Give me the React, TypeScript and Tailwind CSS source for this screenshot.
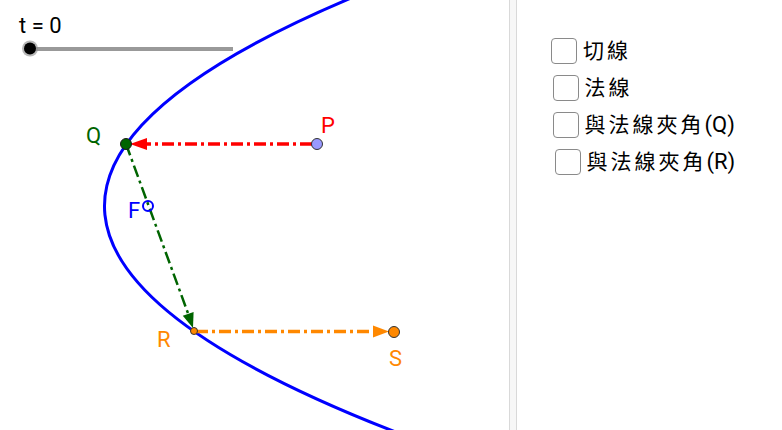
import React from "react";

const FONT = { fontFamily: "Roboto, 'Noto Sans CJK TC', sans-serif" };

// parabola x = 104.5 + 0.0057 (y - 206)^2, drawn as one quadratic bezier
const PARABOLA = "M370.4 -10 Q-183.6 215 416.6 440";
const DASH = "12 4 3 4";

function Canvas() {
  return (
    <div className="relative h-full w-[509px] shrink-0 bg-white">
      <svg width="509" height="430" viewBox="0 0 509 430" className="block" style={FONT}>
        {/* slider */}
        <text x="19" y="33" fontSize="22" fill="#000">t = 0</text>
        <line x1="30" y1="49" x2="233" y2="49" stroke="#999" strokeWidth="4" />
        <circle cx="30" cy="48.5" r="8" fill="#888" opacity="0.6" />
        <circle cx="30" cy="48.5" r="6" fill="#000" />

        <path d={PARABOLA} fill="none" stroke="#0000ff" strokeWidth="3" />

        {/* P -> Q */}
        <line x1="312" y1="144" x2="145" y2="144" stroke="#ff0000" strokeWidth="3.5" strokeDasharray={DASH} />
        <polygon points="130,144 147,138 147,150" fill="#ff0000" />

        {/* Q -> R */}
        <line x1="126" y1="144" x2="189" y2="316" stroke="#006400" strokeWidth="2.5" strokeDasharray={DASH} />
        <polygon points="193,328 182.8,315.8 193.6,311.9" fill="#006400" />

        {/* R -> S */}
        <line x1="196" y1="331.5" x2="376" y2="331.5" stroke="#ff8800" strokeWidth="3.5" strokeDasharray={DASH} />
        <polygon points="389,331.5 373,325.5 373,337.5" fill="#ff8800" />

        {/* points */}
        <circle cx="148" cy="206" r="5" fill="none" stroke="#0000ff" strokeWidth="2" />
        <circle cx="317" cy="144" r="5.5" fill="#9999ff" stroke="#333" strokeWidth="1" />
        <circle cx="126" cy="144" r="5.5" fill="#006400" stroke="#1a1a1a" strokeWidth="1" />
        <circle cx="194" cy="331" r="3.5" fill="#ff8800" stroke="#333" strokeWidth="1" />
        <circle cx="394" cy="332" r="5.5" fill="#ff8800" stroke="#333" strokeWidth="1" />

        {/* labels */}
        <text x="86" y="143" fontSize="22" fill="#006400">Q</text>
        <text x="321" y="133" fontSize="22" fill="#ff0000">P</text>
        <text x="128" y="218" fontSize="22" fill="#0000ff">F</text>
        <text x="157" y="347" fontSize="22" fill="#ff8800">R</text>
        <text x="389" y="366" fontSize="22" fill="#ff8800">S</text>
      </svg>
    </div>
  );
}

function Row(props: { cjk: string; latin?: string; shift: string }) {
  return (
    <label className={`flex h-[27px] items-center gap-[6px] ${props.shift}`}>
      <span className="h-[26px] w-[26px] shrink-0 rounded-[4px] border-[1.5px] border-[#8a8a8a] bg-white" />
      <span className="text-[21px] leading-none text-black">
        <span className="tracking-[3px]">{props.cjk}</span>
        <span className="text-[22px]">{props.latin}</span>
      </span>
    </label>
  );
}

export default function App() {
  return (
    <div className="flex h-[430px] w-[782px] overflow-hidden bg-white" style={FONT}>
      <Canvas />
      <div className="h-full w-[8px] shrink-0 border-x border-[#d9d9d9] bg-[#f7f7f7]" />
      <div className="flex flex-1 flex-col gap-[10px] pl-[34px] pt-[37px]">
        <Row cjk="切線" shift="ml-0" />
        <Row cjk="法線" shift="ml-[1.5px]" />
        <Row cjk="與法線夾角" latin="(Q)" shift="ml-[1.5px]" />
        <Row cjk="與法線夾角" latin="(R)" shift="ml-[3.5px]" />
      </div>
    </div>
  );
}
